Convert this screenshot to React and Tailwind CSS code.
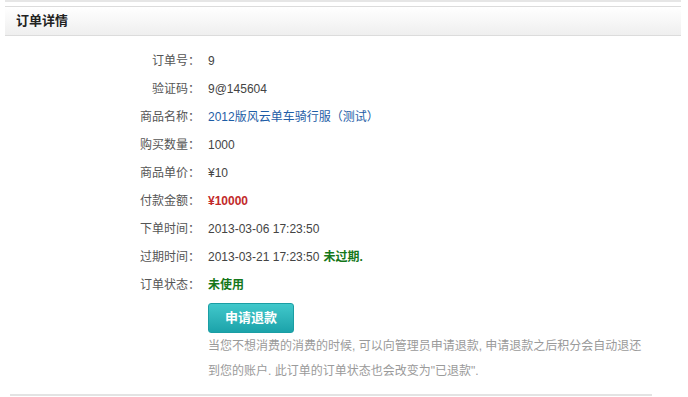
const rows = [
  { label: '订单号：', value: '9' },
  { label: '验证码：', value: '9@145604' },
  { label: '商品名称：', value: '2012版风云单车骑行服（测试）', kind: 'link' },
  { label: '购买数量：', value: '1000' },
  { label: '商品单价：', value: '¥10' },
  { label: '付款金额：', value: '¥10000', kind: 'price' },
  { label: '下单时间：', value: '2013-03-06 17:23:50' },
  { label: '过期时间：', value: '2013-03-21 17:23:50', extra: '未过期.' },
  { label: '订单状态：', value: '未使用', kind: 'status' },
];

const valueClass = {
  link: 'text-[#1e5da6]',
  price: 'text-[#c22a2a] font-bold',
  status: 'text-[#15771a] font-bold',
};

export default function App() {
  return (
    <div
      className="w-[688px] h-[397px] bg-white overflow-hidden text-[12px] text-[#333]"
      style={{ fontFamily: '"Liberation Sans", "Noto Sans CJK SC", sans-serif' }}
    >
      {/* top strip */}
      <div className="mx-[5px] mr-[7px] h-[2px] bg-[#e6e6e6]" />

      {/* Header */}
      <div className="mx-[5px] mr-[7px] mt-[4px] h-[30px] border-t border-b border-[#dcdcdc] bg-gradient-to-b from-white to-[#efefef] flex items-center px-[11px]">
        <h2 className="text-[13px] font-bold text-[#222]">订单详情</h2>
      </div>

      {/* Details */}
      <div className="mt-[11px]">
        {rows.map((row) => (
          <div key={row.label} className="flex items-center h-[28px]">
            <div className="w-[200px] text-right text-[#555]">{row.label}</div>
            <div className={`ml-[8px] ${valueClass[row.kind] || 'text-[#444]'}`}>
              {row.value}
              {row.extra && <span className="ml-[4px] text-[#15771a] font-bold">{row.extra}</span>}
            </div>
          </div>
        ))}
      </div>

      {/* Refund */}
      <div className="ml-[208px] mt-[4px]">
        <button className="w-[86px] h-[30px] rounded-[3px] bg-gradient-to-b from-[#40c8cb] to-[#1ba3aa] border border-[#1a9ea4] text-white font-bold text-[13px]">
          申请退款
        </button>
        <p className="text-[#9a9a9a] leading-[25px] mt-[1px]">
          当您不想消费的消费的时候, 可以向管理员申请退款, 申请退款之后积分会自动退还
          <br />
          到您的账户. 此订单的订单状态也会改变为"已退款".
        </p>
      </div>

      <div className="ml-[10px] w-[642px] h-[2px] bg-[#e3e3e3] mt-[10px]" />
    </div>
  );
}
